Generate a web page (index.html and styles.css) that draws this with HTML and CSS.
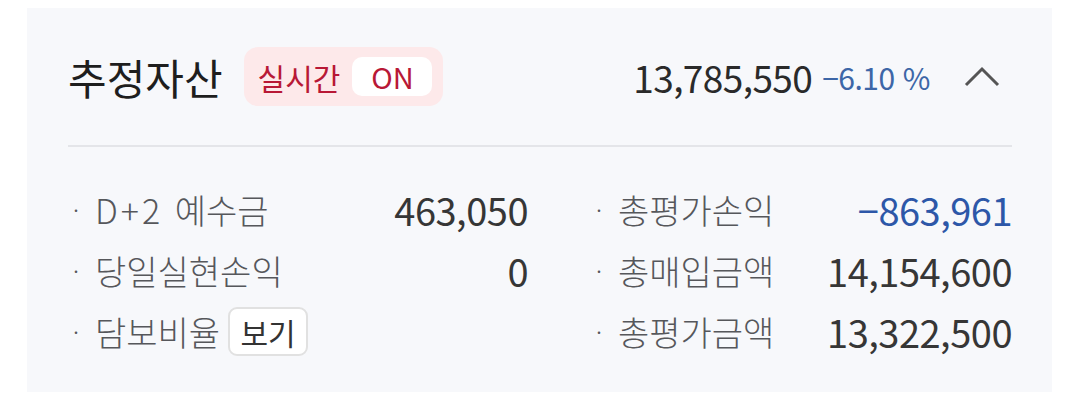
FILE: index.html
```html
<!DOCTYPE html>
<html lang="ko">
<head>
<meta charset="utf-8">
<link rel="stylesheet" href="styles.css">
</head>
<body>
<section class="card">
  <header class="head">
    <div class="head-left">
      <h1 class="title">추정자산</h1>
      <div class="badge"><span class="badge-label">실시간</span><span class="badge-on">ON</span></div>
    </div>
    <div class="head-right">
      <span class="total">13,785,550</span>
      <span class="rate">−6.10 %</span>
      <svg class="chev" width="36" height="22" viewBox="0 0 36 22"><path d="M2 19 L18 3 L34 19" fill="none" stroke="#555" stroke-width="3"/></svg>
    </div>
  </header>
  <div class="grid">
    <div class="row"><span class="label"><span class="dot">·</span><span class="latin">D+2</span>&nbsp;예수금</span><span class="val">463,050</span></div>
    <div class="row"><span class="label"><span class="dot">·</span>총평가손익</span><span class="val blue">−863,961</span></div>
    <div class="row"><span class="label"><span class="dot">·</span>당일실현손익</span><span class="val">0</span></div>
    <div class="row"><span class="label"><span class="dot">·</span>총매입금액</span><span class="val">14,154,600</span></div>
    <div class="row"><span class="label"><span class="dot">·</span>담보비율<span class="btn">보기</span></span><span class="val"></span></div>
    <div class="row"><span class="label"><span class="dot">·</span>총평가금액</span><span class="val">13,322,500</span></div>
  </div>
</section>
</body>
</html>
```
FILE: styles.css
```css
html, body {
  margin: 0;
  background: #ffffff;
}
body {
  padding: 8px 28px 0 27px;
  font-family: "Noto Sans CJK KR", "Noto Sans", sans-serif;
}
.card {
  background: #f7f8fb;
  height: 384px;
  box-sizing: border-box;
  padding: 0 40px 0 41px;
}
.head {
  display: flex;
  align-items: center;
  justify-content: space-between;
  height: 139px;
  border-bottom: 2px solid #e4e5e9;
  box-sizing: border-box;
}
.head-left {
  display: flex;
  align-items: center;
  gap: 21px;
}
.title {
  margin: 0;
  font-size: 42px;
  font-weight: 400;
  color: #1e1e1e;
  line-height: 1;
}
.badge {
  display: flex;
  align-items: center;
  background: #fde9ea;
  border-radius: 14px;
  height: 59px;
  padding: 0 11px 0 14px;
  gap: 12px;
  box-sizing: border-box;
}
.badge-label {
  color: #b81836;
  font-size: 30px;
  line-height: 1;
}
.badge-on {
  background: #ffffff;
  color: #b81836;
  font-size: 29px;
  border-radius: 10px;
  height: 39px;
  width: 80px;
  display: flex;
  align-items: center;
  justify-content: center;
  line-height: 1;
}
.head-right {
  display: flex;
  align-items: center;
  margin-right: 12px;
}
.total {
  font-size: 37px;
  color: #2a2a2a;
  letter-spacing: -0.6px;
}
.rate {
  font-size: 30px;
  color: #3d66a7;
  margin-left: 10px;
  letter-spacing: -0.5px;
  word-spacing: 2px;
}
.chev {
  margin-left: 34px;
}
.grid {
  display: grid;
  grid-template-columns: 460px 1fr;
  column-gap: 63px;
  padding-top: 32px;
}
.row {
  display: flex;
  align-items: center;
  justify-content: space-between;
  height: 61px;
}
.label {
  display: flex;
  align-items: center;
  font-size: 34px;
  color: #56575b;
  font-weight: 300;
  white-space: pre;
}
.latin {
  letter-spacing: 3px;
  margin-right: 2px;
}
.dot {
  width: 22px;
  margin-left: 5px;
  font-size: 24px;
}
.val {
  font-size: 38px;
  color: #363636;
  letter-spacing: -0.5px;
}
.blue {
  color: #2d57a8;
}
.btn {
  margin-left: 8px;
  background: #ffffff;
  border: 2px solid #e1e1e1;
  border-radius: 9px;
  font-size: 30px;
  color: #333;
  height: 49px;
  width: 80px;
  box-sizing: border-box;
  display: flex;
  align-items: center;
  justify-content: center;
  font-weight: 400;
}
```
